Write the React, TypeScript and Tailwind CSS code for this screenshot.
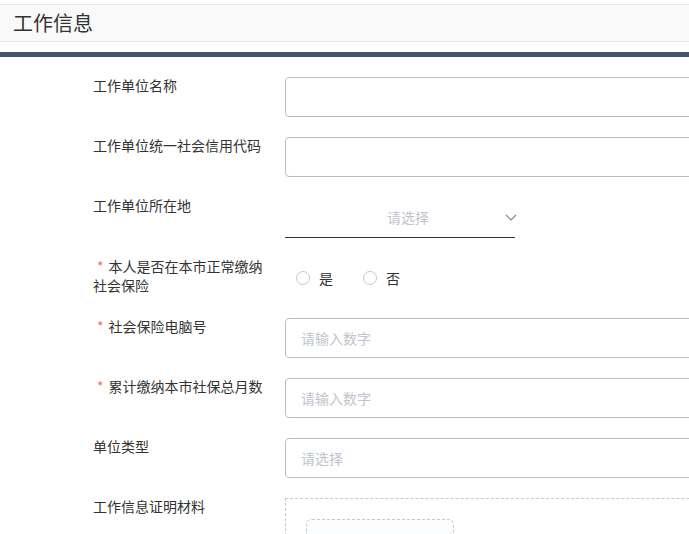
import React from "react";

const font = { fontFamily: '"Noto Sans CJK SC", "Noto Sans", sans-serif' };

function Label({ text, required }: { text: string; required?: boolean }) {
    return (
        <div className="w-[172px] mr-[20px] -mt-[1px] shrink-0 text-[14px] leading-[19px] text-[#333]">
            {required && <span className="text-[#f56c6c] ml-[4px] mr-[5px]">*</span>}
            {text}
        </div>
    );
}

function TextBox({ placeholder }: { placeholder?: string }) {
    return (
        <div className="w-[520px] h-[40px] shrink-0 border border-[#bdbdbd] rounded-[4px] flex items-center pl-[15px] text-[14px] text-[#c0c4cc]">
            {placeholder}
        </div>
    );
}

function Radio({ label }: { label: string }) {
    return (
        <label className="flex items-center mr-[30px]">
            <span className="w-[14px] h-[14px] rounded-full border border-[#c8c8c8] bg-white"/>
            <span className="ml-[9px] text-[14px] text-[#333]">{label}</span>
        </label>
    );
}

export default function App() {
    return (
        <div className="h-screen w-full overflow-hidden bg-white" style={font}>
            <div className="h-[4px]"/>
            <div className="h-[38px] bg-[#f9f9f9] border-y border-[#e6e6e6] flex items-center pl-[13px]">
                <span className="text-[20px] text-[#333] leading-none">工作信息</span>
            </div>
            <div className="h-[10px]"/>
            <div className="h-[5px] bg-[#435468]"/>

            <div className="pt-[20px] pl-[93px]">
                <div className="flex mb-[20px]">
                    <Label text="工作单位名称"/>
                    <TextBox/>
                </div>
                <div className="flex mb-[20px]">
                    <Label text="工作单位统一社会信用代码"/>
                    <TextBox/>
                </div>
                <div className="flex mb-[20px]">
                    <Label text="工作单位所在地"/>
                    <div className="w-[230px] h-[41px] border-b border-[#333] flex items-center relative">
                        <span className="w-full text-center pl-[16px] text-[14px] text-[#c0c4cc]">请选择</span>
                        <svg className="absolute right-[-3px] top-[15px]" width="14" height="10" viewBox="0 0 14 10"
                             fill="none" stroke="#888" strokeWidth="1.2">
                            <path d="M2 3l5 5 5-5"/>
                        </svg>
                    </div>
                </div>
                <div className="flex mb-[20px] h-[40px]">
                    <Label text="本人是否在本市正常缴纳社会保险" required/>
                    <div className="flex items-center pl-[11px] h-[40px]">
                        <Radio label="是"/>
                        <Radio label="否"/>
                    </div>
                </div>
                <div className="flex mb-[20px]">
                    <Label text="社会保险电脑号" required/>
                    <TextBox placeholder="请输入数字"/>
                </div>
                <div className="flex mb-[20px]">
                    <Label text="累计缴纳本市社保总月数" required/>
                    <TextBox placeholder="请输入数字"/>
                </div>
                <div className="flex mb-[20px]">
                    <Label text="单位类型"/>
                    <TextBox placeholder="请选择"/>
                </div>
                <div className="flex">
                    <Label text="工作信息证明材料"/>
                    <div className="w-[520px] h-[200px] shrink-0 border border-dashed border-[#c8c8c8] pt-[20px] pl-[20px]">
                        <div className="w-[148px] h-[148px] border border-dashed border-[#c8c8c8] rounded-[6px] bg-[#fbfdff]"/>
                    </div>
                </div>
            </div>
        </div>
    );
}
